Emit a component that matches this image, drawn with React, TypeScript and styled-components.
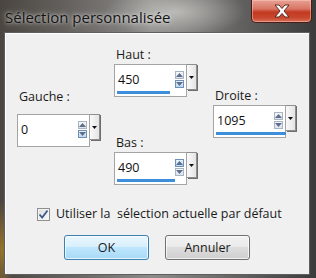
import styled, { createGlobalStyle } from "styled-components";

const GlobalStyle = createGlobalStyle`
  html, body {
    margin: 0;
    padding: 0;
    background: #2a2a2a;
  }
  * {
    box-sizing: border-box;
  }
`;

const Window = styled.div`
  width: 316px;
  height: 278px;
  display: grid;
  grid-template-rows: 32px 1fr;
  background:
    radial-gradient(ellipse 70px 26px at 175px 12px, rgba(205, 205, 200, 0.75), transparent),
    radial-gradient(ellipse 12px 50px at 2px 250px, rgba(160, 120, 40, 0.9), transparent),
    linear-gradient(90deg, #4a4540 0%, #6a6764 25%, #8d8c8a 48%, #6c6b6a 70%, #3b3b3b 100%);
  font-family: "Open Sans", "Noto Sans", sans-serif;
  overflow: hidden;
`;

const TitleBar = styled.div`
  display: flex;
  justify-content: space-between;
  align-items: flex-start;
  padding: 0 4px 0 5px;
`;

const Title = styled.div`
  margin-top: 7px;
  font-size: 15px;
  line-height: 20px;
  color: #141414;
  text-shadow: 0 0 6px rgba(255, 255, 255, 0.7), 0 0 3px rgba(255, 255, 255, 0.6);
`;

const CloseButton = styled.div`
  width: 61px;
  height: 23px;
  border: 1px solid #4a1d16;
  border-top: none;
  border-radius: 0 0 5px 5px;
  background: linear-gradient(
    #e7a193 0%,
    #d97565 40%,
    #c23a22 55%,
    #c8472c 80%,
    #d8705a 100%
  );
  box-shadow: inset 0 0 0 1px rgba(255, 210, 200, 0.45);
  display: flex;
  align-items: center;
  justify-content: center;
`;

const Panel = styled.div`
  margin: 0 6px 3px 4px;
  background: #f0f0f0;
  border: 1px solid #5e5e5e;
  box-shadow: inset 1px 1px 0 #ffffff;
  display: flex;
  flex-direction: column;
`;

const Fields = styled.div`
  display: grid;
  grid-template-columns: 97px 99px auto;
  padding-left: 12px;
`;

const Column = styled.div<{ $top: number }>`
  display: flex;
  flex-direction: column;
  align-items: flex-start;
  padding-top: ${(p) => p.$top}px;
`;

const Field = styled.div<{ $gap: number; $after?: number }>`
  display: flex;
  flex-direction: column;
  align-items: flex-start;
  gap: ${(p) => p.$gap}px;
  margin-bottom: ${(p) => p.$after ?? 0}px;
`;

const Label = styled.div`
  font-size: 12.5px;
  line-height: 16px;
  color: #1a1a1a;
  padding-left: 2px;
`;

const SpinRow = styled.div`
  display: flex;
  align-items: flex-start;
`;

const SpinBox = styled.div`
  position: relative;
  width: 73px;
  height: 33px;
  background: #ffffff;
  border: 1px solid #a4a4a4;
  display: flex;
  align-items: center;
  padding: 0 0 2px 3px;
`;

const Value = styled.span`
  font-size: 12.5px;
  color: #111;
  flex: 1;
`;

const Bar = styled.div`
  position: absolute;
  left: 2px;
  bottom: 2px;
  height: 3px;
  background: #3d8fdb;
`;

const Arrows = styled.div`
  display: flex;
  flex-direction: column;
  gap: 1px;
  margin-right: 2px;
`;

const ArrowBtn = styled.div<{ $active?: boolean }>`
  width: 9px;
  height: 8px;
  border: 1px solid ${(p) => (p.$active ? "#6f90b8" : "#a9b4c2")};
  background: ${(p) =>
    p.$active
      ? "linear-gradient(#e8f3fb, #bcd7ee)"
      : "linear-gradient(#f6f7f9, #dde3ea)"};
  display: flex;
  align-items: center;
  justify-content: center;
`;

const DropButton = styled.div`
  width: 10px;
  height: 26px;
  border: 1px solid #8e8e8e;
  border-left: none;
  background: linear-gradient(90deg, #fafafa, #e4e4e4);
  box-shadow: 1px 1px 0 #6d6d6d;
  display: flex;
  justify-content: center;
  padding-top: 11px;
`;

const CheckRow = styled.label`
  display: flex;
  align-items: center;
  gap: 6px;
  margin: 22px 0 0 32px;
  font-size: 12.5px;
  line-height: 14px;
  color: #1a1a1a;
  white-space: pre;
`;

const CheckBox = styled.div`
  width: 13px;
  height: 13px;
  border: 1px solid #8f8f8f;
  background: linear-gradient(135deg, #dcdcdc, #fbfbfb);
  box-shadow: inset 0 0 0 1px #f4f4f4;
  display: flex;
  align-items: center;
  justify-content: center;
`;

const ButtonRow = styled.div`
  display: flex;
  gap: 16px;
  margin: 14px 0 0 59px;
`;

const Button = styled.div<{ $focused?: boolean }>`
  width: 85px;
  height: 25px;
  border-radius: 3px;
  border: 1px solid ${(p) => (p.$focused ? "#3c7fb1" : "#707070")};
  background: ${(p) =>
    p.$focused
      ? "linear-gradient(#eaf6fd 0%, #d9f0fc 45%, #bee6fd 50%, #a7d9f5 100%)"
      : "linear-gradient(#f2f2f2 0%, #ebebeb 45%, #dddddd 50%, #cfcfcf 100%)"};
  box-shadow: inset 0 0 0 1px rgba(255, 255, 255, 0.7);
  display: flex;
  align-items: center;
  justify-content: center;
  font-size: 12.5px;
  color: #1a1a1a;
`;

const UpIcon = () => (
  <svg width="7" height="4" viewBox="0 0 7 4">
    <path d="M0 4 L3.5 0 L7 4 Z" fill="#5b6f8c" />
  </svg>
);

const DownIcon = () => (
  <svg width="7" height="4" viewBox="0 0 7 4">
    <path d="M0 0 L3.5 4 L7 0 Z" fill="#5b6f8c" />
  </svg>
);

const Caret = () => (
  <svg width="5" height="3" viewBox="0 0 5 3">
    <path d="M0 0 L2.5 3 L5 0 Z" fill="#111" />
  </svg>
);

const CloseIcon = () => (
  <svg width="18" height="14" viewBox="0 0 18 14">
    <path
      d="M2 1 L6 1 L9 4.5 L12 1 L16 1 L11 7 L16 13 L12 13 L9 9.5 L6 13 L2 13 L7 7 Z"
      fill="#ffffff"
      stroke="#5a2a22"
      strokeWidth="1"
      strokeLinejoin="round"
    />
  </svg>
);

const CheckMark = () => (
  <svg width="11" height="11" viewBox="0 0 11 11">
    <path
      d="M1.5 5.5 L4.2 8.5 L9.5 1.5"
      fill="none"
      stroke="#3b5a8a"
      strokeWidth="1.8"
    />
  </svg>
);

type SpinProps = { value: string; bar: number; active?: "up" | "down" };

const Spinner = ({ value, bar, active }: SpinProps) => (
  <SpinRow>
    <SpinBox>
      <Value>{value}</Value>
      <Arrows>
        <ArrowBtn $active={active === "up"}>
          <UpIcon />
        </ArrowBtn>
        <ArrowBtn $active={active === "down"}>
          <DownIcon />
        </ArrowBtn>
      </Arrows>
      {bar > 0 && <Bar style={{ width: bar }} />}
    </SpinBox>
    <DropButton>
      <Caret />
    </DropButton>
  </SpinRow>
);

export default function App() {
  return (
    <>
      <GlobalStyle />
      <Window>
        <TitleBar>
          <Title>Sélection personnalisée</Title>
          <CloseButton>
            <CloseIcon />
          </CloseButton>
        </TitleBar>
        <Panel>
          <Fields>
            <Column $top={56}>
              <Field $gap={9}>
                <Label>Gauche :</Label>
                <Spinner value="0" bar={0} active="down" />
              </Field>
            </Column>
            <Column $top={14}>
              <Field $gap={1} $after={38}>
                <Label>Haut :</Label>
                <Spinner value="450" bar={53} active="down" />
              </Field>
              <Field $gap={1}>
                <Label>Bas :</Label>
                <Spinner value="490" bar={58} active="up" />
              </Field>
            </Column>
            <Column $top={55}>
              <Field $gap={1}>
                <Label>Droite :</Label>
                <Spinner value="1095" bar={70} />
              </Field>
            </Column>
          </Fields>
          <CheckRow>
            <CheckBox>
              <CheckMark />
            </CheckBox>
            {"Utiliser la  sélection actuelle par défaut"}
          </CheckRow>
          <ButtonRow>
            <Button $focused>OK</Button>
            <Button>Annuler</Button>
          </ButtonRow>
        </Panel>
      </Window>
    </>
  );
}
